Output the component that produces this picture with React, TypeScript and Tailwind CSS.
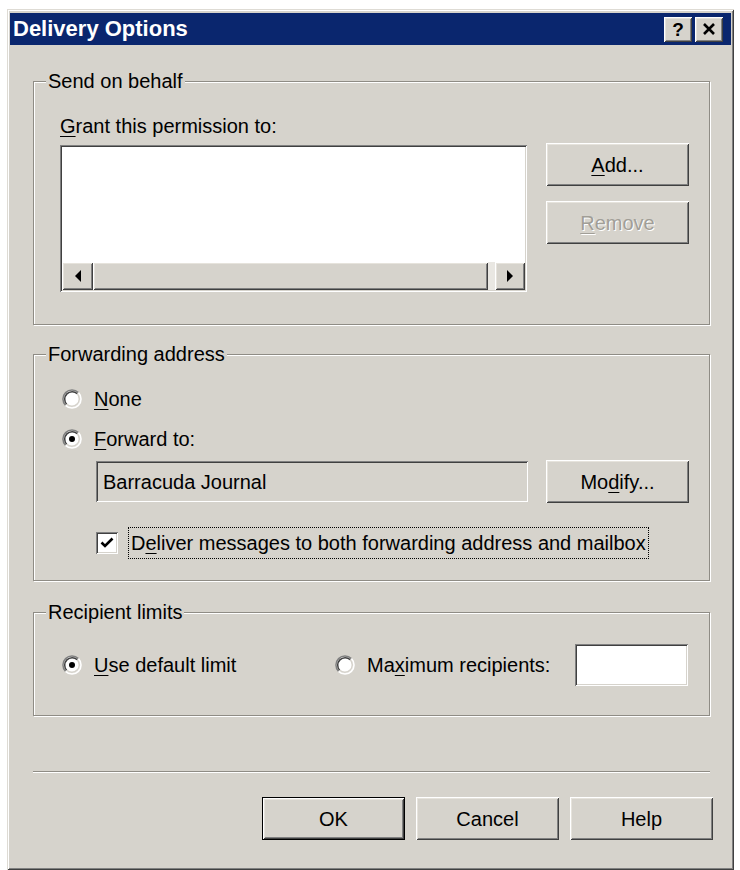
import React from 'react';

// classic 3D edges
const raised =
  'shadow-[inset_1px_1px_0_#ffffff,inset_-1px_-1px_0_#404040,inset_2px_2px_0_#e6e3dc,inset_-2px_-2px_0_#808080]';
const sunken =
  'shadow-[inset_1px_1px_0_#808080,inset_-1px_-1px_0_#ffffff,inset_2px_2px_0_#404040,inset_-2px_-2px_0_#d6d3cc]';

const Key: React.FC<{ children: React.ReactNode }> = ({ children }) => (
  <span className="underline underline-offset-[3px] decoration-1">{children}</span>
);

const Btn: React.FC<{ children: React.ReactNode; disabled?: boolean; primary?: boolean }> = ({
  children,
  disabled,
  primary,
}) => (
  <button
    className={`w-[143px] h-[43px] bg-[#d6d3cc] text-[20px] leading-none flex items-center justify-center ${
      primary ? 'border border-black' : ''
    } ${raised} ${disabled ? 'text-[#a19e97] [text-shadow:1px_1px_0_#ffffff]' : 'text-black'}`}
  >
    <span>{children}</span>
  </button>
);

const Radio: React.FC<{ checked?: boolean; children: React.ReactNode }> = ({ checked, children }) => (
  <div className="flex items-center gap-[12px] h-[24px]">
    <svg width="20" height="20" viewBox="0 0 20 20" className="shrink-0">
      <circle cx="10" cy="10" r="8.5" fill="#ffffff" />
      <path d="M3.6 16.4A9 9 0 0 1 16.4 3.6" fill="none" stroke="#808080" strokeWidth="1.5" />
      <path d="M4.7 15.3A7.5 7.5 0 0 1 15.3 4.7" fill="none" stroke="#404040" strokeWidth="1.5" />
      <path d="M16.4 3.6A9 9 0 0 1 3.6 16.4" fill="none" stroke="#ffffff" strokeWidth="1.5" />
      <path d="M15.3 4.7A7.5 7.5 0 0 1 4.7 15.3" fill="none" stroke="#d6d3cc" strokeWidth="1.5" />
      {checked && <circle cx="10" cy="10" r="3" fill="#000000" />}
    </svg>
    <span className="leading-[24px]">{children}</span>
  </div>
);

// the legend sits at the fieldset's padding start, so it's pulled back with a negative margin
const Group: React.FC<{ title: string; className?: string; legendClass: string; children: React.ReactNode }> = ({
  title,
  className = '',
  legendClass,
  children,
}) => (
  <fieldset
    className={`border border-[#8f8c85] shadow-[inset_1px_1px_0_#ffffff,1px_1px_0_#ffffff] ${className}`}
  >
    <legend className={`px-[2px] leading-[24px] bg-[#d6d3cc] ${legendClass}`}>{title}</legend>
    {children}
  </fieldset>
);

const ScrollBtn: React.FC<{ dir: 'left' | 'right'; w: string }> = ({ dir, w }) => (
  <div className={`${w} h-[28px] bg-[#d6d3cc] flex items-center justify-center ${raised}`}>
    <svg width="8" height="12" viewBox="0 0 8 12">
      {dir === 'left' ? <polygon points="7,0 7,12 1,6" fill="#000" /> : <polygon points="1,0 1,12 7,6" fill="#000" />}
    </svg>
  </div>
);

const App: React.FC = () => {
  return (
    <div className="w-[740px] h-[870px] bg-white pt-[9px] pl-[7px] pr-[6px] font-['Liberation_Sans',Arial,sans-serif] text-[20px] text-black">
      <div className="h-[861px] bg-[#d6d3cc] pt-[4px] px-[3px] flex flex-col shadow-[inset_1px_1px_0_#dedbd4,inset_-1px_-1px_0_#404040,inset_2px_2px_0_#ffffff,inset_-2px_-2px_0_#808080]">
        {/* Title bar */}
        <div className="h-[32px] bg-[#0a266e] flex items-center justify-between pl-[3px] pr-[8px]">
          <span className="text-white font-bold text-[22px] leading-none">Delivery Options</span>
          <div className="flex gap-[3px]">
            <div className={`w-[28px] h-[25px] bg-[#d6d3cc] flex items-center justify-center font-bold text-[19px] leading-none ${raised}`}>
              ?
            </div>
            <div className={`w-[28px] h-[25px] bg-[#d6d3cc] flex items-center justify-center ${raised}`}>
              <svg width="14" height="12" viewBox="0 0 14 12">
                <path d="M2 1L12 11M12 1L2 11" stroke="#000" strokeWidth="2.6" />
              </svg>
            </div>
          </div>
        </div>

        <div className="flex flex-col pl-[23px] pr-[21px] pt-[24px]">
          {/* Send on behalf */}
          <Group title="Send on behalf" legendClass="-ml-[14px]" className="pl-[26px] pr-[20px] pt-[21px] pb-[32px]">
            <div className="leading-[24px]">
              <Key>G</Key>rant this permission to:
            </div>
            <div className="mt-[7px] flex gap-[19px] items-start">
              <div className={`w-[467px] h-[147px] bg-white p-[2px] flex flex-col ${sunken}`}>
                <div className="flex-1" />
                <div className="h-[28px] flex bg-[#e9e7e2]">
                  <ScrollBtn dir="left" w="w-[31px]" />
                  <div className={`w-[395px] h-[28px] bg-[#d6d3cc] ${raised}`} />
                  <div className="flex-1" />
                  <ScrollBtn dir="right" w="w-[30px]" />
                </div>
              </div>
              <div className="flex flex-col gap-[15px] -mt-[2px]">
                <Btn>
                  <Key>A</Key>dd...
                </Btn>
                <Btn disabled>
                  <Key>R</Key>emove
                </Btn>
              </div>
            </div>
          </Group>

          {/* Forwarding address */}
          <Group
            title="Forwarding address"
            legendClass="-ml-[16px]"
            className="mt-[17px] pl-[28px] pr-[20px] pt-[21px] pb-[21px]"
          >
            <Radio>
              <Key>N</Key>one
            </Radio>
            <div className="mt-[16px]">
              <Radio checked>
                <Key>F</Key>orward to:
              </Radio>
            </div>
            <div className="mt-[9px] pl-[34px] flex items-center gap-[18px]">
              <div className={`w-[432px] h-[41px] bg-[#d6d3cc] pl-[7px] flex items-center ${sunken}`}>
                Barracuda Journal
              </div>
              <Btn>
                Mo<Key>d</Key>ify...
              </Btn>
            </div>
            <div className="mt-[24px] pl-[34px] flex items-center gap-[10px]">
              <div className={`w-[22px] h-[22px] bg-white flex items-center justify-center ${sunken}`}>
                <svg width="14" height="12" viewBox="0 0 14 12">
                  <path d="M1.5 5.5L5 9L12.5 1.5" fill="none" stroke="#000" strokeWidth="2.6" />
                </svg>
              </div>
              <div className="h-[32px] px-[2px] flex items-center border border-dotted border-black">
                D<Key>e</Key>liver messages to both forwarding address and mailbox
              </div>
            </div>
          </Group>

          {/* Recipient limits */}
          <Group
            title="Recipient limits"
            legendClass="-ml-[16px]"
            className="mt-[19px] pl-[28px] pr-[21px] pt-[20px] pb-[29px]"
          >
            <div className="flex items-center h-[42px]">
              <div className="w-[273px]">
                <Radio checked>
                  <Key>U</Key>se default limit
                </Radio>
              </div>
              <div className="w-[240px]">
                <Radio>
                  Ma<Key>x</Key>imum recipients:
                </Radio>
              </div>
              <div className={`w-[113px] h-[42px] bg-white ${sunken}`} />
            </div>
          </Group>

          {/* Separator */}
          <div className="mt-[55px] h-[2px] border-t border-[#8f8c85] border-b border-b-white" />

          <div className="mt-[24px] flex justify-end gap-[11px] -mr-[3px]">
            <Btn primary>OK</Btn>
            <Btn>Cancel</Btn>
            <Btn>Help</Btn>
          </div>
        </div>
      </div>
    </div>
  );
};

export default App;
